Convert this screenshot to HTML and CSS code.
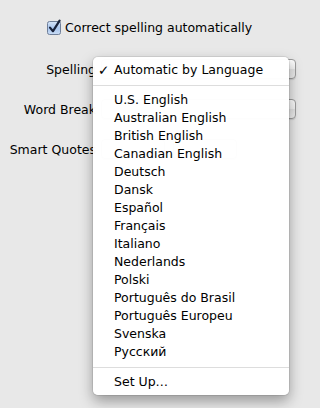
FILE: index.html
```html
<!DOCTYPE html>
<html>
<head>
<meta charset="utf-8">
<link rel="stylesheet" href="styles.css">
</head>
<body>
<div class="prefs">
  <div class="check-row">
    <svg class="checkbox" width="16" height="16" viewBox="0 0 16 16">
      <defs>
        <linearGradient id="cb" x1="0" y1="0" x2="0" y2="1">
          <stop offset="0" stop-color="#d6e5f8"/>
          <stop offset="0.5" stop-color="#a9c6ee"/>
          <stop offset="1" stop-color="#c9dcf5"/>
        </linearGradient>
      </defs>
      <rect x="1.5" y="2.5" width="13" height="13" rx="2" fill="url(#cb)" stroke="#6f7f99"/>
      <path d="M4 8.6 L7 12.2 L13.6 1.6" fill="none" stroke="#18223a" stroke-width="2.2" stroke-linecap="round" stroke-linejoin="round"/>
    </svg>
    <span class="check-label">Correct spelling automatically</span>
  </div>
  <div class="form">
    <div class="label">Spelling</div>
    <div class="popup wide"></div>
    <div class="label">Word Break</div>
    <div class="popup wide"></div>
    <div class="label">Smart Quotes</div>
    <div class="quotes">
      <div class="popup small"></div>
      <div class="popup small"></div>
    </div>
  </div>
</div>

<div class="menu">
  <div class="item checked"><span class="tick">✓</span>Automatic by Language</div>
  <div class="sep"></div>
  <div class="item">U.S. English</div>
  <div class="item">Australian English</div>
  <div class="item">British English</div>
  <div class="item">Canadian English</div>
  <div class="item">Deutsch</div>
  <div class="item">Dansk</div>
  <div class="item">Español</div>
  <div class="item">Français</div>
  <div class="item">Italiano</div>
  <div class="item">Nederlands</div>
  <div class="item">Polski</div>
  <div class="item">Português do Brasil</div>
  <div class="item">Português Europeu</div>
  <div class="item">Svenska</div>
  <div class="item">Русский</div>
  <div class="sep"></div>
  <div class="item">Set Up…</div>
</div>
</body>
</html>
```

FILE: styles.css
```css
html, body {
  margin: 0;
  padding: 0;
}
body {
  width: 308px;
  height: 408px;
  background: #e8e8e8;
  font-family: "DejaVu Sans", "Noto Sans", sans-serif;
  font-size: 12.5px;
  color: #000;
  overflow: hidden;
  position: relative;
}
.prefs {
  padding-top: 18px;
}
.check-row {
  display: flex;
  align-items: center;
  padding-left: 46px;
  height: 18px;
  gap: 3px;
}
.checkbox {
  display: block;
}
.form {
  margin-top: 23px;
  display: grid;
  grid-template-columns: 96px 1fr;
  row-gap: 20px;
  column-gap: 5px;
}
.label {
  text-align: right;
  height: 20px;
  line-height: 22px;
  white-space: nowrap;
}
.popup {
  height: 18px;
  border: 1px solid #9c9c9c;
  border-radius: 4px;
  background: linear-gradient(#ffffff, #f3f3f3 50%, #e4e4e4 51%, #f0f0f0);
  box-shadow: 0 1px 1px rgba(0,0,0,0.12);
}
.popup.wide {
  margin-right: 12px;
}
.quotes {
  display: flex;
  gap: 8px;
}
.popup.small {
  width: 62px;
}
.menu {
  position: absolute;
  left: 93px;
  top: 57px;
  width: 196px;
  padding: 4px 0;
  box-sizing: border-box;
  background: rgba(255,255,255,0.975);
  border-radius: 5px;
  box-shadow: 0 0 0 1px rgba(0,0,0,0.08), 0 6px 14px rgba(0,0,0,0.35);
}
.item {
  position: relative;
  height: 18px;
  line-height: 18px;
  padding-left: 21px;
  white-space: nowrap;
}
.tick {
  position: absolute;
  left: 5px;
  top: 0;
  font-size: 13.5px;
  font-weight: bold;
}
.sep {
  height: 12px;
  position: relative;
}
.sep::after {
  content: "";
  position: absolute;
  left: 0;
  right: 0;
  top: 6px;
  height: 1px;
  background: #dddddd;
}
```
